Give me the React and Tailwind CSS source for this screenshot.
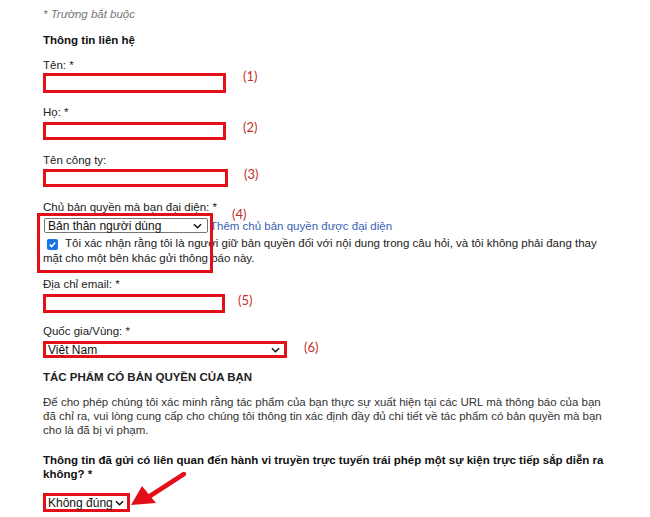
import React from "react";

const Chevron = ({ className }) => (
  <svg viewBox="0 0 10 6" className={className} fill="none" stroke="#111" strokeWidth="1.6">
    <path d="M1 1l4 4 4-4" />
  </svg>
);

const Num = ({ children }) => (
  <span className="font-['Lato','Open_Sans',sans-serif] text-[13px] text-[#c0312b] leading-none">
    {children}
  </span>
);

const Field = ({ label, num, gap, labelMt, boxMt, w, h, lift = 2 }) => (
  <div>
    <p className="leading-[14px]" style={{ marginTop: labelMt }}>
      {label}
    </p>
    <div className="flex items-center" style={{ marginTop: boxMt }}>
      <div className="border-[3px] border-[#e3101a] bg-white" style={{ width: w, height: h }} />
      <div style={{ marginLeft: gap, marginTop: -lift * 2 }}>
        <Num>{num}</Num>
      </div>
    </div>
  </div>
);

export default function App() {
  return (
    <div className="relative w-[650px] h-[517px] overflow-hidden bg-white pl-[43px] font-['Liberation_Sans',Arial,sans-serif] text-[11.5px] text-[#222]">
      <p className="mt-[7px] leading-[14px] italic text-[#777]">* Trường bắt buộc</p>
      <p className="mt-[12px] leading-[14px] font-bold text-[#111]">Thông tin liên hệ</p>

      <Field label="Tên: *" num="(1)" labelMt={11} boxMt={1} w={183} h={20} gap={17} lift={5} />
      <Field label="Họ: *" num="(2)" labelMt={12} boxMt={3} w={183} h={18} gap={17} />
      <Field label="Tên công ty:" num="(3)" labelMt={13} boxMt={2} w={185} h={18} gap={16} />

      {/* chủ bản quyền */}
      <p className="mt-[13px] leading-[14px]">Chủ bản quyền mà bạn đại diện: *</p>
      <div className="relative mt-[4px] flex items-center">
        <div className="ml-[1px] flex h-[15px] w-[164px] items-center justify-between rounded-[2px] border border-[#767676] bg-white pl-[3px] pr-[5px] text-[12px] text-[#111]">
          <span className="leading-none">Bản thân người dùng</span>
          <Chevron className="h-[6px] w-[9px]" />
        </div>
        <span className="ml-[2px] leading-[14px] text-[#3a62b4]">Thêm chủ bản quyền được đại diện</span>
        <span className="absolute left-[189px] top-[-11px]">
          <Num>(4)</Num>
        </span>
      </div>
      <p className="mt-[3px] leading-[15px] w-[580px]">
        <span className="inline-flex h-[11px] w-[11px] translate-y-[1px] items-center justify-center rounded-[2px] bg-[#1a73e8] ml-[4px] mr-[7px] align-[-1px]">
          <svg viewBox="0 0 10 10" className="h-[9px] w-[9px]" fill="none" stroke="#fff" strokeWidth="1.8">
            <path d="M2 5.2l2 2 4-4.5" />
          </svg>
        </span>
        Tôi xác nhận rằng tôi là người giữ bản quyền đối với nội dung trong câu hỏi, và tôi không phải đang thay
        <br />
        mặt cho một bên khác gửi thông báo này.
      </p>
      <div className="pointer-events-none absolute left-[37px] top-[213px] h-[60px] w-[176px] border-[3px] border-[#e3101a]" />

      <Field label="Địa chỉ email: *" num="(5)" labelMt={11} boxMt={3} w={182} h={19} gap={13} />

      <p className="mt-[11px] leading-[14px]">Quốc gia/Vùng: *</p>
      <div className="mt-[3px] flex items-center">
        <div className="flex h-[17px] w-[244px] items-center justify-between border-[3px] border-[#e3101a] bg-white pl-[2px] pr-[4px] text-[12px] text-[#111]">
          <span className="leading-none">Việt Nam</span>
          <Chevron className="h-[6px] w-[9px]" />
        </div>
        <div className="ml-[17px] -mt-[2px]">
          <Num>(6)</Num>
        </div>
      </div>

      <p className="mt-[12px] leading-[14px] font-bold text-[#222]">TÁC PHẨM CÓ BẢN QUYỀN CỦA BẠN</p>
      <p className="mt-[11px] leading-[14px] text-[#333]">
        Để cho phép chúng tôi xác minh rằng tác phẩm của bạn thực sự xuất hiện tại các URL mà thông báo của bạn
        <br />
        đã chỉ ra, vui lòng cung cấp cho chúng tôi thông tin xác định đầy đủ chi tiết về tác phẩm có bản quyền mà bạn
        <br />
        cho là đã bị vi phạm.
      </p>
      <p className="mt-[16px] leading-[14px] font-bold text-[#111]">
        Thông tin đã gửi có liên quan đến hành vi truyền trực tuyến trái phép một sự kiện trực tiếp sắp diễn ra
        <br />
        không? *
      </p>
      <div className="mt-[12px] flex h-[19px] w-[87px] items-center justify-between border-[3px] border-[#e3101a] bg-white pl-[2px] pr-[3px] text-[12px] text-[#111]">
        <span className="leading-none">Không đúng</span>
        <Chevron className="h-[6px] w-[9px]" />
      </div>

      {/* arrow */}
      <svg className="absolute left-[128px] top-[470px]" width="62" height="40" viewBox="0 0 62 40">
        <path d="M56 4 L22 26" stroke="#e3101a" strokeWidth="4.5" strokeLinecap="round" />
        <path d="M3 35 L14 16 L28 33 Z" fill="#e3101a" />
      </svg>
    </div>
  );
}
